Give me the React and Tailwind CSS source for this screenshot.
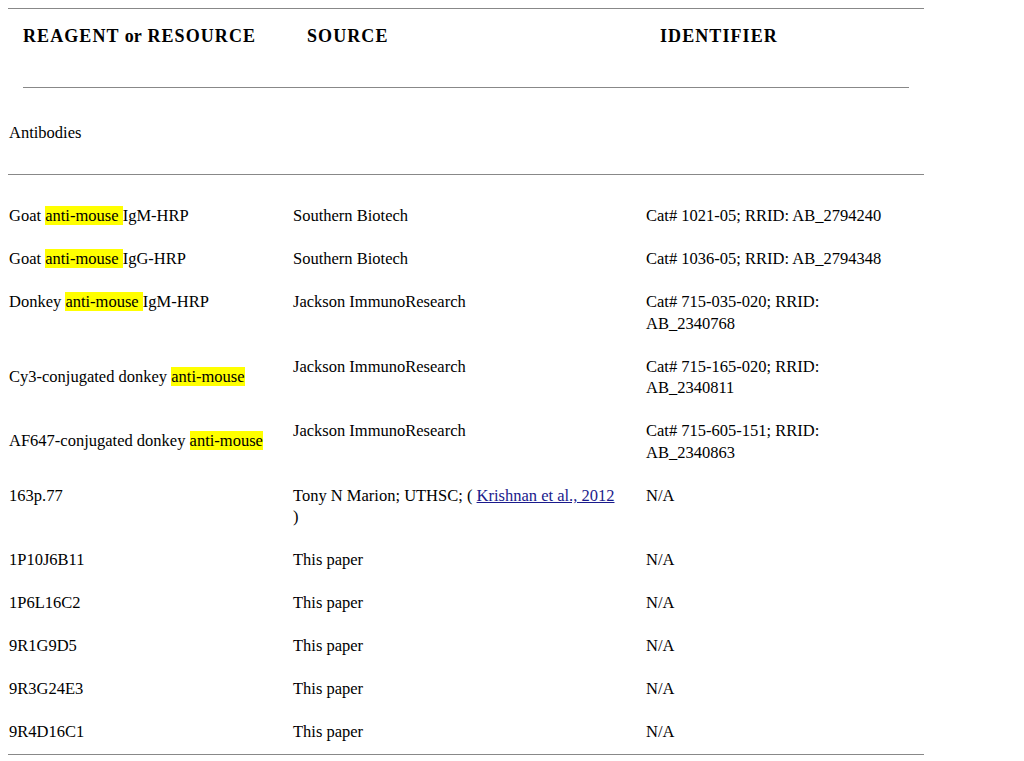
const HL = ({ children }) => <span className="bg-[#ffff00]">{children}</span>;

const rows = [
  [<>Goat <HL>anti-mouse </HL>IgM-HRP</>, "Southern Biotech", "Cat# 1021-05; RRID: AB_2794240"],
  [<>Goat <HL>anti-mouse </HL>IgG-HRP</>, "Southern Biotech", "Cat# 1036-05; RRID: AB_2794348"],
  [<>Donkey <HL>anti-mouse </HL>IgM-HRP</>, "Jackson ImmunoResearch", <>Cat# 715-035-020; RRID:<br />AB_2340768</>],
  [<>Cy3-conjugated donkey <HL>anti-mouse</HL></>, "Jackson ImmunoResearch", <>Cat# 715-165-020; RRID:<br />AB_2340811</>, true],
  [<>AF647-conjugated donkey <HL>anti-mouse</HL></>, "Jackson ImmunoResearch", <>Cat# 715-605-151; RRID:<br />AB_2340863</>, true],
  ["163p.77", <>Tony N Marion; UTHSC; ( <a className="text-[#1a1a8c] underline">Krishnan et al., 2012</a><br />)</>, "N/A"],
  ["1P10J6B11", "This paper", "N/A"],
  ["1P6L16C2", "This paper", "N/A"],
  ["9R1G9D5", "This paper", "N/A"],
  ["9R3G24E3", "This paper", "N/A"],
  ["9R4D16C1", "This paper", "N/A"],
];

export default function App() {
  return (
    <div className="bg-white text-black text-[16.5px] leading-[21.5px] p-2 w-[932px]" style={{ fontFamily: '"Liberation Serif", "DejaVu Serif", serif' }}>
      <div className="border-t border-[#888]">
        <div className="px-[15px] pt-[16px]">
          <div className="grid grid-cols-[284px_353px_1fr] border-b border-[#888] pb-[40px] text-[18px] leading-[22px] font-bold tracking-[0.06em]">
            <div>REAGENT <span className="tracking-normal">or</span> RESOURCE</div>
            <div>SOURCE</div>
            <div>IDENTIFIER</div>
          </div>
        </div>
        <div className="pt-[34px] pb-[30px] pl-px border-b border-[#888]">Antibodies</div>
        <div className="pt-[20px] border-b border-[#888]">
          {rows.map(([a, b, c, mid], i) => (
            <div key={i} className="grid grid-cols-[284px_353px_1fr] py-[10.75px] pl-px">
              <div className={mid ? "pt-[10px]" : ""}>{a}</div>
              <div>{b}</div>
              <div>{c}</div>
            </div>
          ))}
        </div>
      </div>
    </div>
  );
}
